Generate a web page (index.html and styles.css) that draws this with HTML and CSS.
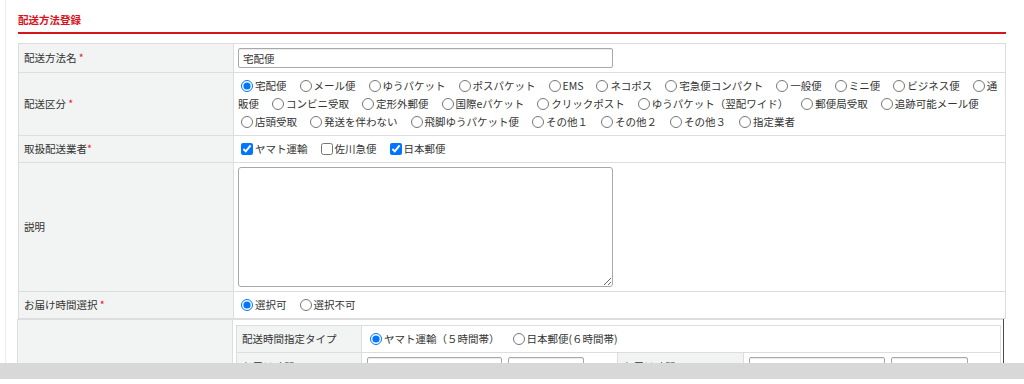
FILE: index.html
```html
<!DOCTYPE html>
<html lang="ja">
<head>
<meta charset="utf-8">
<title>配送方法登録</title>
<link rel="stylesheet" href="styles.css">
</head>
<body>
<div class="page">
  <h2 class="title">配送方法登録</h2>
  <table class="form">
    <colgroup><col class="c-label"><col class="c-value"></colgroup>
    <tr class="r-name">
      <th>配送方法名 <span class="req">*</span></th>
      <td><input class="txt name" type="text" value="宅配便"></td>
    </tr>
    <tr class="r-kubun">
      <th>配送区分 <span class="req">*</span></th>
      <td class="opts"><label class="opt"><input type="radio" name="kubun" checked>宅配便</label><label class="opt"><input type="radio" name="kubun">メール便</label><label class="opt"><input type="radio" name="kubun">ゆうパケット</label><label class="opt"><input type="radio" name="kubun">ポスパケット</label><label class="opt"><input type="radio" name="kubun">EMS</label><label class="opt"><input type="radio" name="kubun">ネコポス</label><label class="opt"><input type="radio" name="kubun">宅急便コンパクト</label><label class="opt"><input type="radio" name="kubun">一般便</label><label class="opt"><input type="radio" name="kubun">ミニ便</label><label class="opt"><input type="radio" name="kubun">ビジネス便</label><label class="opt"><input type="radio" name="kubun">通販便</label><label class="opt"><input type="radio" name="kubun">コンビニ受取</label><label class="opt"><input type="radio" name="kubun">定形外郵便</label><label class="opt"><input type="radio" name="kubun">国際eパケット</label><label class="opt"><input type="radio" name="kubun">クリックポスト</label><label class="opt"><input type="radio" name="kubun">ゆうパケット（翌配ワイド）</label><label class="opt"><input type="radio" name="kubun">郵便局受取</label><label class="opt"><input type="radio" name="kubun">追跡可能メール便</label><label class="opt"><input type="radio" name="kubun">店頭受取</label><label class="opt"><input type="radio" name="kubun">発送を伴わない</label><label class="opt"><input type="radio" name="kubun">飛脚ゆうパケット便</label><label class="opt"><input type="radio" name="kubun">その他１</label><label class="opt"><input type="radio" name="kubun">その他２</label><label class="opt"><input type="radio" name="kubun">その他３</label><label class="opt"><input type="radio" name="kubun">指定業者</label></td>
    </tr>
    <tr class="r-line">
      <th>取扱配送業者<span class="req">*</span></th>
      <td class="opts"><label class="opt"><input type="checkbox" checked>ヤマト運輸</label><label class="opt"><input type="checkbox">佐川急便</label><label class="opt"><input type="checkbox" checked>日本郵便</label></td>
    </tr>
    <tr class="r-desc">
      <th>説明</th>
      <td><textarea class="desc"></textarea></td>
    </tr>
    <tr class="r-line">
      <th>お届け時間選択 <span class="req">*</span></th>
      <td class="opts"><label class="opt"><input type="radio" name="sel" checked>選択可</label><label class="opt"><input type="radio" name="sel">選択不可</label></td>
    </tr>
  </table>
  <table class="form time">
    <colgroup><col class="c-label2"><col class="c-value"></colgroup>
    <tr>
      <th></th>
      <td class="inner-wrap">
        <table class="inner">
          <colgroup><col class="i-label"><col class="i-val"><col class="i-label2"><col class="i-val2"></colgroup>
          <tr class="i-r1">
            <th>配送時間指定タイプ</th>
            <td colspan="3" class="opts"><label class="opt"><input type="radio" name="tt" checked>ヤマト運輸（５時間帯）</label><label class="opt"><input type="radio" name="tt">日本郵便(６時間帯)</label></td>
          </tr>
          <tr class="i-r2">
            <th>お届け時間1</th>
            <td><div class="pair"><input class="txt t1" type="text" value="午前中（8時～12時）"><input class="txt t2" type="text" value="0812"></div></td>
            <th>お届け時間2</th>
            <td><div class="pair"><input class="txt t3" type="text" value="14時～16時"><input class="txt t4" type="text" value="1416"></div></td>
          </tr>
          <tr class="i-r2">
            <th>お届け時間3</th>
            <td><div class="pair"><input class="txt t1" type="text" value="16時～18時"><input class="txt t2" type="text" value="1618"></div></td>
            <th>お届け時間4</th>
            <td><div class="pair"><input class="txt t3" type="text" value="18時～20時"><input class="txt t4" type="text" value="1820"></div></td>
          </tr>
        </table>
      </td>
    </tr>
  </table>
</div>
<div class="shade" aria-hidden="true"></div>
</body>
</html>
```

FILE: styles.css
```css
html, body {
  margin: 0;
  padding: 0;
  background: #ffffff;
}
body {
  font-family: "Noto Sans CJK JP", "Noto Sans", sans-serif;
  font-size: 10.5px;
  color: #333333;
  overflow: hidden;
  height: 384px;
}
.page {
  margin-left: 5px;
  border-left: 1px solid #ececec;
  padding: 11px 18px 0 12px;
  min-height: 384px;
  box-sizing: border-box;
}
.title {
  margin: 0 0 9px 0;
  font-size: 10.5px;
  line-height: 18px;
  font-weight: bold;
  color: #d7141c;
  padding-bottom: 3px;
  border-bottom: 2px solid #d7141c;
}
.form {
  width: 988px;
  border-collapse: collapse;
  table-layout: fixed;
}
.c-label { width: 215px; }
.form > tbody > tr > th {
  background: #f2f3f3;
  border: 1px solid #dddddd;
  font-weight: normal;
  text-align: left;
  vertical-align: middle;
  padding: 0 5px;
  line-height: 18px;
}
.form > tbody > tr > td {
  border: 1px solid #dddddd;
  padding: 4px 4px;
  line-height: 18px;
  vertical-align: middle;
}
.req { color: #e0262b; }
.r-name td { padding: 5px 5px; height: 20px; }
.r-kubun td { padding: 5px 4px 3px 4px; }
.r-desc td { padding: 4px 5px; }

.opt {
  margin-right: 10px;
}
.opt input {
  margin: 3px 2px 0 3px;
  vertical-align: top;
  width: 12px;
  height: 12px;
}

.txt {
  box-sizing: border-box;
  height: 20px;
  border: 1px solid #a8a8a8;
  border-radius: 2px;
  box-shadow: inset 0 1px 1px rgba(0,0,0,0.08);
  font-family: inherit;
  font-size: 10.5px;
  color: #333333;
  padding: 0 4px;
  margin: 0;
  vertical-align: middle;
  background: #ffffff;
}
.name { width: 375px; }
.desc {
  display: block;
  box-sizing: border-box;
  width: 375px;
  height: 120px;
  margin: 0;
  border: 1px solid #a8a8a8;
  border-radius: 3px;
  font-family: inherit;
  font-size: 10.5px;
}

.time {
  width: 987px;
  margin-left: -1px;
}
.c-label2 { width: 215px; }
.time > tbody > tr > td.inner-wrap {
  padding: 5px 3px 0 3px;
  border-right: 1px solid #4a4a4a;
  border-top: 1px solid #dddddd;
}
.inner {
  width: 765px;
  border-collapse: collapse;
  table-layout: fixed;
}
.i-label { width: 125px; }
.i-val { width: 256px; }
.i-label2 { width: 126px; }
.inner th {
  background: #f2f3f3;
  border: 1px solid #dddddd;
  font-weight: normal;
  text-align: left;
  padding: 0 5px;
  line-height: 18px;
  vertical-align: middle;
}
.inner td {
  border: 1px solid #dddddd;
  padding: 4px 5px;
  line-height: 18px;
  vertical-align: middle;
}
.i-r1 th, .i-r1 td { height: 16px; }
.pair {
  display: flex;
  gap: 6px;
}
.t1 { width: 135px; }
.t2 { width: 76px; }
.t3 { width: 136px; }
.t4 { width: 77px; }

.shade {
  position: fixed;
  left: 0;
  right: 0;
  top: 363px;
  bottom: 0;
  background: linear-gradient(#d8d8d8 0, #d8d8d8 16px, #ffffff 16px);
}
```
